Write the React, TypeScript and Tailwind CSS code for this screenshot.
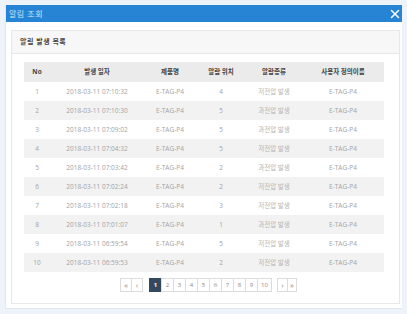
import { X } from "lucide-react";

const rows = [
  { no: 1, date: "2018-03-11 07:10:32", product: "E-TAG-P4", pos: 4, type: "저전압 발생", name: "E-TAG-P4" },
  { no: 2, date: "2018-03-11 07:10:30", product: "E-TAG-P4", pos: 5, type: "과전압 발생", name: "E-TAG-P4" },
  { no: 3, date: "2018-03-11 07:09:02", product: "E-TAG-P4", pos: 5, type: "과전압 발생", name: "E-TAG-P4" },
  { no: 4, date: "2018-03-11 07:04:32", product: "E-TAG-P4", pos: 5, type: "저전압 발생", name: "E-TAG-P4" },
  { no: 5, date: "2018-03-11 07:03:42", product: "E-TAG-P4", pos: 2, type: "과전압 발생", name: "E-TAG-P4" },
  { no: 6, date: "2018-03-11 07:02:24", product: "E-TAG-P4", pos: 2, type: "저전압 발생", name: "E-TAG-P4" },
  { no: 7, date: "2018-03-11 07:02:18", product: "E-TAG-P4", pos: 3, type: "저전압 발생", name: "E-TAG-P4" },
  { no: 8, date: "2018-03-11 07:01:07", product: "E-TAG-P4", pos: 1, type: "과전압 발생", name: "E-TAG-P4" },
  { no: 9, date: "2018-03-11 06:59:54", product: "E-TAG-P4", pos: 5, type: "저전압 발생", name: "E-TAG-P4" },
  { no: 10, date: "2018-03-11 06:59:53", product: "E-TAG-P4", pos: 2, type: "저전압 발생", name: "E-TAG-P4" },
];

const font = { fontFamily: '"Open Sans", "Noto Sans CJK KR", sans-serif' };

export default function App() {
  return (
    <div className="w-[407px] h-[314px] bg-[#eef3fa] pt-[5px] pl-[5px]" style={font}>
      <div className="w-[397px] h-[304px] bg-white flex flex-col border-l border-b border-[#e3e8ef]">
        {/* Header */}
        <div className="h-[17px] bg-[#2784d5] flex items-center justify-between pl-[3px] shrink-0">
          <span className="text-[8px] text-[#cfe3f6] tracking-[0.5px]">알림 조회</span>
          <X size={14} strokeWidth={2.5} className="text-white" />
        </div>

        {/* Body */}
        <div className="flex-1 pl-[5px] pr-[2px] pt-[8px] pb-[4px] flex">
          <div className="flex-1 border border-[#e8e8e8] flex flex-col">
            <div className="h-[23px] bg-[#f7f7f7] border-b border-[#e6e6e6] flex items-center pl-[8px]">
              <span className="text-[7px] font-bold text-[#444] tracking-[0.5px]">알림 발생 목록</span>
            </div>

            <div className="pl-[12px] pr-[14px] pt-[8px]">
              <table className="w-[360px] table-fixed border-collapse text-center">
                <colgroup>
                  <col className="w-[26px]" />
                  <col className="w-[94px]" />
                  <col className="w-[52px]" />
                  <col className="w-[50px]" />
                  <col className="w-[56px]" />
                  <col className="w-[82px]" />
                </colgroup>
                <thead>
                  <tr className="h-[20px] bg-[#ebebeb] text-[6.5px] font-bold text-[#444]">
                    <th>No</th>
                    <th>발생 일자</th>
                    <th>제품명</th>
                    <th>알람 위치</th>
                    <th>알람종류</th>
                    <th>사용자 정의이름</th>
                  </tr>
                </thead>
                <tbody>
                  {rows.map((r) => (
                    <tr
                      key={r.no}
                      className={`h-[19px] text-[6.5px] text-[#a3a3a3] ${r.no % 2 === 0 ? "bg-[#f2f2f2]" : "bg-white"}`}
                    >
                      <td>{r.no}</td>
                      <td>{r.date}</td>
                      <td>{r.product}</td>
                      <td>{r.pos}</td>
                      <td className="text-[#b5b5b5]">{r.type}</td>
                      <td>{r.name}</td>
                    </tr>
                  ))}
                </tbody>
              </table>

              {/* Pagination */}
              <div className="flex justify-center items-center mt-[6px] pl-[8px] text-[6px] text-[#888]">
                <div className="flex text-[8px]">
                  <span className="w-[12px] h-[14px] border border-[#dcdcdc] flex items-center justify-center">«</span>
                  <span className="w-[12px] h-[14px] border border-[#dcdcdc] -ml-px flex items-center justify-center">‹</span>
                </div>
                <div className="flex ml-[6px]">
                  {[1, 2, 3, 4, 5, 6, 7, 8, 9, 10].map((n) => (
                    <span
                      key={n}
                      className={`${n === 10 ? "w-[15px]" : "w-[13px]"} h-[14px] border flex items-center justify-center ${
                        n === 1 ? "bg-[#34495e] border-[#34495e] text-white font-bold" : "border-[#dcdcdc] -ml-px"
                      }`}
                    >
                      {n}
                    </span>
                  ))}
                </div>
                <div className="flex ml-[5px] text-[8px]">
                  <span className="w-[11px] h-[14px] border border-[#dcdcdc] flex items-center justify-center">›</span>
                  <span className="w-[10px] h-[14px] border border-[#dcdcdc] -ml-px flex items-center justify-center">»</span>
                </div>
              </div>
            </div>
          </div>
        </div>
      </div>
    </div>
  );
}
